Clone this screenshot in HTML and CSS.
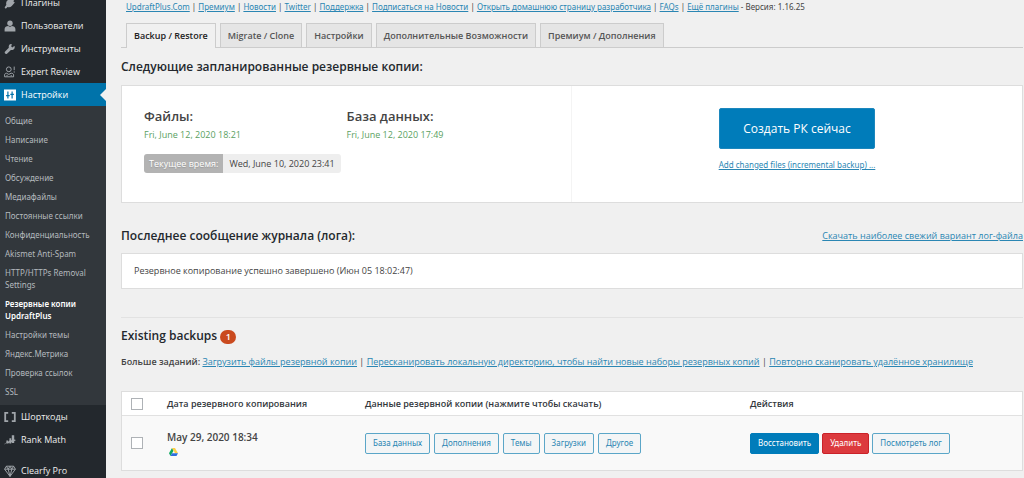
FILE: index.html
```html
<!DOCTYPE html>
<html lang="ru">
<head>
<meta charset="utf-8">
<title>UpdraftPlus</title>
<link rel="stylesheet" href="styles.css">
</head>
<body>
<div class="layout">
  <nav class="sidebar">
    <ul class="menu">
      <li><a class="menu-link" href="#"><svg class="icon" viewBox="0 0 20 20"><path d="M13 4.500l4-3 1.500 1.500-3 4 2.500 2-5 6c-2 2-5 2.500-7 1.500L3 19.500 1 17.500 4 13c-1-2-.5-5 1.500-7l5-4z"/></svg>Плагины</a></li>
      <li><a class="menu-link" href="#"><svg class="icon" viewBox="0 0 20 20"><circle cx="10" cy="5.500" r="4.500"/><path d="M1 19v-4c0-3 3-5 6-5 2 1.500 4 1.500 6 0 3 0 6 2 6 5v4z"/></svg>Пользователи</a></li>
      <li><a class="menu-link" href="#"><svg class="icon" viewBox="0 0 20 20"><path d="M17 5l-3 2.500L12 6l1-4C10 1 7 3.500 8 8L1.500 14.500c-1.500 2 1.500 5 3.500 3.500L11.500 11.500c4.500 1 7.500-2.500 6-6.500z"/></svg>Инструменты</a></li>
      <li><a class="menu-link" href="#"><svg class="icon icon-line" viewBox="0 0 20 20"><circle cx="8" cy="5.500" r="4"/><path d="M1 18v-3c0-2 1.500-3 3-3l4 2 4-2c2 0 4 1 4 3v3zM5 17v-2M12 17v-2M17 1v6M17 9v2"/></svg>Expert Review</a></li>
      <li>
        <a class="menu-link current" href="#"><svg class="icon" viewBox="0 0 20 20"><path fill-rule="evenodd" d="M0 1h20v18H0zM5.500 4v6H3.500v2h2v4h2v-4h2v-2h-2V4zM12.500 4v4h-2v2h2v6h2v-6h2V8h-2V4z"/></svg>Настройки</a>
        <ul class="submenu">
          <li><a href="#">Общие</a></li>
          <li><a href="#">Написание</a></li>
          <li><a href="#">Чтение</a></li>
          <li><a href="#">Обсуждение</a></li>
          <li><a href="#">Медиафайлы</a></li>
          <li><a href="#">Постоянные ссылки</a></li>
          <li><a href="#">Конфиденциальность</a></li>
          <li><a href="#">Akismet Anti-Spam</a></li>
          <li><a href="#">HTTP/HTTPs Removal Settings</a></li>
          <li><a class="active" href="#">Резервные копии UpdraftPlus</a></li>
          <li><a href="#">Настройки темы</a></li>
          <li><a href="#">Яндекс.Метрика</a></li>
          <li><a href="#">Проверка ссылок</a></li>
          <li><a href="#">SSL</a></li>
        </ul>
      </li>
      <li><a class="menu-link" href="#"><svg class="icon icon-line" viewBox="0 0 20 20"><path stroke-width="3" d="M7 3H2v14h5M13 3h5v14h-5"/></svg>Шорткоды</a></li>
      <li><a class="menu-link" href="#"><svg class="icon" viewBox="0 0 20 20"><path d="M0 17l4-3v-3h3v2l2-2V7h3v4l1-1V2h4v7l3 1-3 2v3h-4v-2l-1 1v2H9v-2l-2 2H4v-1l-3 2z"/></svg>Rank Math</a></li>
      <li class="spaced"><a class="menu-link" href="#"><svg class="icon icon-line" viewBox="0 0 20 20"><path d="M4 2h12l3 5-9 12L1 7zM1 7h18M4 2l3 5 3 12 3-12 3-5M7 7l3-5 3 5"/></svg>Clearfy Pro</a></li>
    </ul>
  </nav>

  <main class="content">
    <p class="links"><a href="#">UpdraftPlus.Com</a> | <a href="#">Премиум</a> | <a href="#">Новости</a> | <a href="#">Twitter</a> | <a href="#">Поддержка</a> | <a href="#">Подписаться на Новости</a> | <a href="#">Открыть домашнюю страницу разработчика</a> | <a href="#">FAQs</a> | <a href="#">Ещё плагины</a> - Версия: 1.16.25</p>

    <nav class="tabs">
      <a class="tab tab-active" href="#">Backup / Restore</a>
      <a class="tab" href="#">Migrate / Clone</a>
      <a class="tab" href="#">Настройки</a>
      <a class="tab" href="#">Дополнительные Возможности</a>
      <a class="tab" href="#">Премиум / Дополнения</a>
    </nav>

    <h2 class="heading">Следующие запланированные резервные копии:</h2>
    <section class="panel schedule">
      <div class="schedule-info">
        <div>
          <h3 class="subheading">Файлы:</h3>
          <p class="date">Fri, June 12, 2020 18:21</p>
        </div>
        <div>
          <h3 class="subheading">База данных:</h3>
          <p class="date">Fri, June 12, 2020 17:49</p>
        </div>
        <p class="clock"><span class="clock-label">Текущее время:</span><span class="clock-value">Wed, June 10, 2020 23:41</span></p>
      </div>
      <div class="schedule-action">
        <button class="backup-now" type="button">Создать РК сейчас</button>
        <a class="incremental" href="#">Add changed files (incremental backup) ...</a>
      </div>
    </section>

    <div class="log-head">
      <h2 class="heading">Последнее сообщение журнала (лога):</h2>
      <a href="#">Скачать наиболее свежий вариант лог-файла</a>
    </div>
    <section class="panel log">Резервное копирование успешно завершено (Июн 05 18:02:47)</section>

    <section class="existing">
      <h2 class="heading">Existing backups <span class="badge">1</span></h2>
      <p class="tasks"><strong>Больше заданий:</strong> <a href="#">Загрузить файлы резервной копии</a> | <a href="#">Пересканировать локальную директорию, чтобы найти новые наборы резервных копий</a> | <a href="#">Повторно сканировать удалённое хранилище</a></p>
      <table class="backups">
        <thead>
          <tr>
            <th class="col-check"><input class="check" type="checkbox" aria-label="Выбрать все"></th>
            <th class="col-date">Дата резервного копирования</th>
            <th class="col-data">Данные резервной копии (нажмите чтобы скачать)</th>
            <th>Действия</th>
          </tr>
        </thead>
        <tbody>
          <tr>
            <td><input class="check" type="checkbox" aria-label="May 29, 2020 18:34"></td>
            <td><div class="backup-date">May 29, 2020 18:34</div>
              <svg class="drive" viewBox="0 0 18 16"><path fill="#0da960" d="M6 0L0 10.500 3 16 9 5.300z"/><path fill="#ffcf48" d="M6 0h6l6 10.500h-6z"/><path fill="#2d6fdd" d="M6 10.500h12L15 16H3z"/></svg></td>
            <td><div class="buttons data-buttons">
              <button class="btn" type="button">База данных</button>
              <button class="btn" type="button">Дополнения</button>
              <button class="btn" type="button">Темы</button>
              <button class="btn" type="button">Загрузки</button>
              <button class="btn" type="button">Другое</button>
            </div></td>
            <td><div class="buttons">
              <button class="btn btn-primary" type="button">Восстановить</button>
              <button class="btn btn-danger" type="button">Удалить</button>
              <button class="btn" type="button">Посмотреть лог</button>
            </div></td>
          </tr>
        </tbody>
      </table>
    </section>
  </main>
</div>
</body>
</html>
```
FILE: styles.css
```css
* { box-sizing: border-box; }

body {
  margin: 0;
  height: 100vh;
  overflow: hidden;
  background: #f0f0f0;
  color: #444;
  font-family: "Open Sans", "Noto Sans", sans-serif;
  font-size: 9px;
  line-height: 14px;
}

h2, h3, p, ul { margin: 0; padding: 0; }
ul { list-style: none; }
a { color: #2a86b3; }
button, input { font: inherit; margin: 0; }

.layout { display: flex; height: 100%; }

.sidebar {
  flex: 0 0 106px;
  background: #23282d;
  overflow: hidden;
}
.menu { margin-top: -9px; }
.menu-link {
  display: flex;
  align-items: center;
  gap: 5px;
  height: 23px;
  padding-left: 4px;
  color: #eee;
  text-decoration: none;
  white-space: nowrap;
}
.icon { flex: none; width: 12px; height: 12px; fill: #a0a5aa; }
.icon-line { fill: none; stroke: #a0a5aa; stroke-width: 1.6; }
.spaced { margin-top: 8px; }
.current {
  position: relative;
  background: #0073aa;
  color: #fff;
}
.current .icon { fill: #fff; }
.current::after {
  content: "";
  position: absolute;
  right: 0;
  top: 6px;
  border: 6px solid transparent;
  border-left-width: 0;
  border-right-color: #f0f0f0;
}
.submenu { padding: 6px 0 3px; background: #32373c; }
.submenu a {
  display: block;
  padding: 3px 4px 4px 5px;
  color: #b4b9be;
  font-family: "Noto Sans", "Open Sans", sans-serif;
  font-size: 8px;
  line-height: 12px;
  text-decoration: none;
}
.submenu .active { color: #fff; font-weight: 600; }

.content { flex: 1; min-width: 0; padding: 0 1px 0 15px; white-space: nowrap; }

.links {
  padding-left: 5px;
  font-family: "Noto Sans", "Open Sans", sans-serif;
  font-size: 8px;
}

.tabs {
  display: flex;
  gap: 4px;
  margin-top: 9px;
  padding-left: 5px;
  border-bottom: 1px solid #ccc;
}
.tab {
  height: 24px;
  padding: 0 7px;
  border: 1px solid #ccc;
  border-bottom: 0;
  background: #e5e5e5;
  color: #555;
  font-weight: 600;
  line-height: 24px;
  text-decoration: none;
}
.tab-active {
  margin-bottom: -1px;
  height: 25px;
  background: #f0f0f0;
  color: #222;
}

.heading { color: #23282d; font-size: 12px; font-weight: 600; line-height: 18px; }
.tabs + .heading { margin: 10px 0 9px; }

.panel { border: 1px solid #ddd; background: #fff; }
.schedule { display: grid; grid-template-columns: 1fr 1fr; }
.schedule-info {
  display: grid;
  grid-template-columns: 1fr 1fr;
  padding: 21px 22px 29px;
  border-right: 1px solid #f4f4f4;
}
.subheading { color: #444; font-size: 13px; font-weight: 600; line-height: 18px; }
.date { margin-top: 3px; color: #5a9f5f; line-height: 14px; }
.clock { grid-column: 1 / -1; display: flex; margin-top: 12px; line-height: 19px; }
.clock-label {
  padding: 0 5px;
  border-radius: 3px 0 0 3px;
  background: #b3b3b3;
  color: #fff;
  text-shadow: 0 1px 1px #999;
}
.clock-value { padding: 0 6px; border-radius: 0 3px 3px 0; background: #eee; }
.schedule-action {
  display: flex;
  flex-direction: column;
  align-items: center;
  gap: 9px;
  padding-top: 22px;
}
.backup-now {
  padding: 0 23px;
  height: 41px;
  border: 1px solid #1c87bd;
  border-radius: 2px;
  background: #007cba;
  color: #fff;
  font-size: 12px;
}
.incremental {
  font-family: "Noto Sans", "Open Sans", sans-serif;
  font-size: 8px;
}

.log-head {
  display: flex;
  justify-content: space-between;
  align-items: center;
  margin: 24px 0 8px;
}
.log { padding: 10px 12px; }

.existing { margin-top: 28px; padding-top: 9px; border-top: 1px solid #e2e2e2; }
.badge {
  display: inline-block;
  width: 16px;
  margin-top: 3px;
  border-radius: 7px;
  background: #ca4a1f;
  color: #fff;
  font-size: 9px;
  font-weight: 600;
  line-height: 14px;
  text-align: center;
  vertical-align: top;
}
.tasks { margin: 10px 0 22px; }
.tasks strong { font-weight: 600; }

.backups {
  width: 100%;
  table-layout: fixed;
  border: 1px solid #ddd;
  border-spacing: 0;
  background: #fff;
}
.backups th {
  height: 24px;
  padding: 0;
  border-bottom: 1px solid #e1e1e1;
  color: #32373c;
  font-weight: 600;
  text-align: left;
}
.backups td { height: 54px; padding: 0; background: #f9f9f9; vertical-align: middle; }
.col-check { width: 45px; }
.col-date { width: 22%; }
.col-data { width: 385px; }
.check {
  appearance: none;
  display: block;
  width: 12px;
  height: 12px;
  margin-left: 9px;
  border: 1px solid #aeb2b6;
  background: #fff;
}
.backup-date { font-size: 10px; font-weight: 600; }
.drive { display: block; width: 9px; height: 8px; margin: 4px 0 0 2px; }
.buttons { display: flex; gap: 3px; }
.data-buttons { gap: 4px; }
.btn {
  height: 21px;
  padding: 0 7px;
  border: 1px solid #5ba6c8;
  border-radius: 2px;
  background: #f3f5f6;
  color: #2a86b3;
  font-family: "Noto Sans", "Open Sans", sans-serif;
  font-size: 8px;
}
.btn-primary { border-color: #007cba; background: #007cba; color: #fff; }
.btn-danger { border-color: #ca2229; background: #dc3a3e; color: #fff; }
```
